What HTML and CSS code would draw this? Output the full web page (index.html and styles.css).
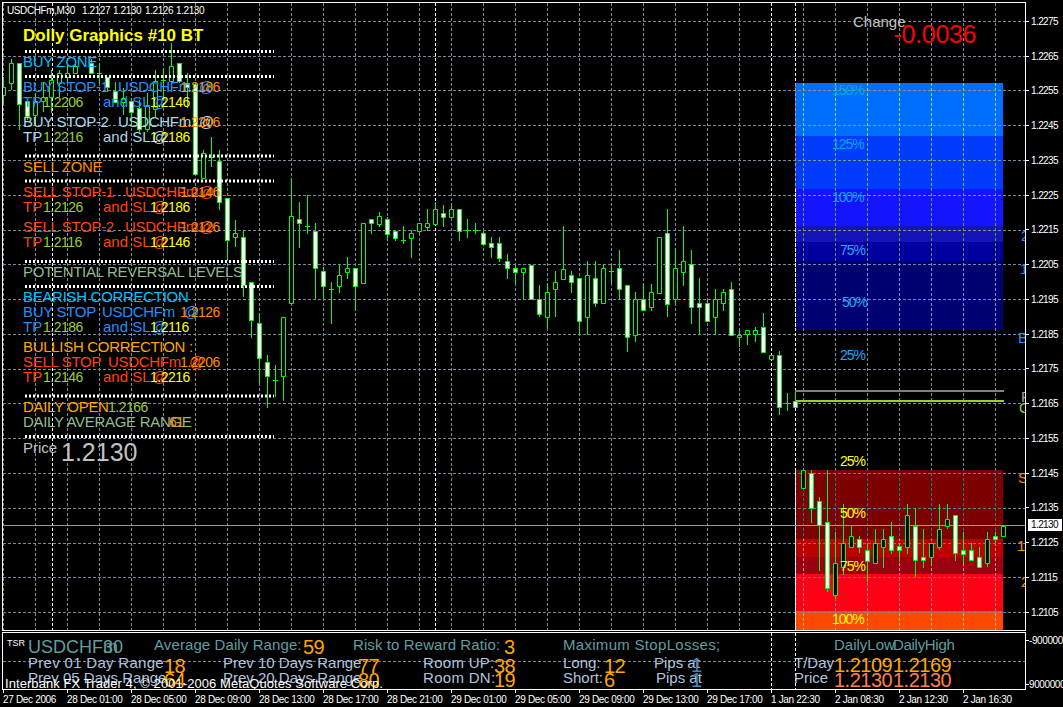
FILE: index.html
```html
<!DOCTYPE html>
<html lang="en">
<head>
<meta charset="utf-8">
<title>USDCHFm,M30</title>
<link rel="stylesheet" href="styles.css">
</head>
<body>
<main class="terminal">
  <section class="chart">
    <svg class="canvas chart-canvas" viewBox="3 3 1022 627" xmlns="http://www.w3.org/2000/svg">
      <defs>
        <path id="vgrid" d="M3.5 3V630M35.5 3V630M67.5 3V630M99.5 3V630M131.5 3V630M163.5 3V630M195.5 3V630M227.5 3V630M259.5 3V630M291.5 3V630M323.5 3V630M355.5 3V630M387.5 3V630M419.5 3V630M451.5 3V630M483.5 3V630M515.5 3V630M547.5 3V630M579.5 3V630M611.5 3V630M643.5 3V630M675.5 3V630M707.5 3V630M739.5 3V630M771.5 3V630M803.5 3V630M835.5 3V630M867.5 3V630M899.5 3V630M931.5 3V630M963.5 3V630M995.5 3V630"/>
        <path id="hgrid" d="M3 21.5H1025M3 56.5H1025M3 90.5H1025M3 125.5H1025M3 160.5H1025M3 195.5H1025M3 230.5H1025M3 264.5H1025M3 299.5H1025M3 334.5H1025M3 369.5H1025M3 403.5H1025M3 438.5H1025M3 473.5H1025M3 508.5H1025M3 543.5H1025M3 577.5H1025M3 612.5H1025"/>
        <clipPath id="c1"><rect x="795" y="83" width="208" height="53"/></clipPath>
        <clipPath id="c2"><rect x="795" y="136" width="208" height="53"/></clipPath>
        <clipPath id="c3"><rect x="795" y="189" width="208" height="37"/></clipPath>
        <clipPath id="c4"><rect x="795" y="226" width="208" height="16"/></clipPath>
        <clipPath id="c5"><rect x="795" y="242" width="208" height="19"/></clipPath>
        <clipPath id="c6"><rect x="795" y="261" width="208" height="69"/></clipPath>
        <clipPath id="c7"><rect x="795" y="470" width="208" height="69"/></clipPath>
        <clipPath id="c8"><rect x="795" y="539" width="208" height="18"/></clipPath>
        <clipPath id="c9"><rect x="795" y="557" width="208" height="17"/></clipPath>
        <clipPath id="c10"><rect x="795" y="574" width="208" height="37"/></clipPath>
        <clipPath id="c11"><rect x="795" y="611" width="208" height="20"/></clipPath>
      </defs>

      <rect class="z1" x="795" y="83" width="208" height="53"/>
      <rect class="z2" x="795" y="136" width="208" height="53"/>
      <rect class="z3" x="795" y="189" width="208" height="37"/>
      <rect class="z4" x="795" y="226" width="208" height="16"/>
      <rect class="z5" x="795" y="242" width="208" height="19"/>
      <rect class="z6" x="795" y="261" width="208" height="69"/>
      <rect class="z7" x="795" y="470" width="208" height="69"/>
      <rect class="z8" x="795" y="539" width="208" height="18"/>
      <rect class="z9" x="795" y="557" width="208" height="17"/>
      <rect class="z10" x="795" y="574" width="208" height="37"/>
      <rect class="z11" x="795" y="611" width="208" height="20"/>

      <use href="#vgrid" class="grid"/>
      <use href="#hgrid" class="grid"/>
      <use href="#vgrid" class="grid v1" clip-path="url(#c1)"/>
      <use href="#vgrid" class="grid v2" clip-path="url(#c2)"/>
      <use href="#vgrid" class="grid v3" clip-path="url(#c3)"/>
      <use href="#vgrid" class="grid v4" clip-path="url(#c4)"/>
      <use href="#vgrid" class="grid v5" clip-path="url(#c5)"/>
      <use href="#vgrid" class="grid v6" clip-path="url(#c6)"/>
      <use href="#vgrid" class="grid v7" clip-path="url(#c7)"/>
      <use href="#vgrid" class="grid v8" clip-path="url(#c8)"/>
      <use href="#vgrid" class="grid v9" clip-path="url(#c9)"/>
      <use href="#vgrid" class="grid v10" clip-path="url(#c10)"/>
      <use href="#vgrid" class="grid v11" clip-path="url(#c11)"/>
      <use href="#hgrid" class="grid hb" clip-path="url(#c1)"/>
      <use href="#hgrid" class="grid hb" clip-path="url(#c2)"/>
      <use href="#hgrid" class="grid hb" clip-path="url(#c3)"/>
      <use href="#hgrid" class="grid hb" clip-path="url(#c4)"/>
      <use href="#hgrid" class="grid hr" clip-path="url(#c7)"/>
      <use href="#hgrid" class="grid hr" clip-path="url(#c8)"/>
      <use href="#hgrid" class="grid hr" clip-path="url(#c9)"/>
      <use href="#hgrid" class="grid hr" clip-path="url(#c10)"/>

      <path class="sep" d="M52.5 3V630M435.5 3V630M771.5 3V630M795.5 3V630"/>
      <path class="sep sep-orange" d="M795.5 83V189"/>
      <path class="sep sep-yellow" d="M795.5 189V330"/>
      <path class="sep sep-cyan" d="M795.5 470V630"/>

      <path class="bid" d="M3 525.5H1025"/>
      <path class="level-grey" d="M795 391H1004"/>
      <path class="level-green" d="M795 401H1004"/>

      <path class="wick" d="M3.5 77V103M11.5 59V90M19.5 63V130M27.5 97V120M35.5 93V125M43.5 82V112M51.5 70V113M59.5 70V97M67.5 63V83M75.5 60V73M91.5 59V73M99.5 63V83M107.5 77V92M115.5 82V103M123.5 88V115M131.5 98V125M139.5 100V132M147.5 93V132M155.5 70V117M163.5 68V97M171.5 43V83M179.5 63V83M187.5 73V108M195.5 84V175M203.5 150V178M211.5 137V167M219.5 150V210M227.5 198V260M235.5 220V247M243.5 230V297M251.5 282V338M259.5 313V383M267.5 355V408M275.5 365V397M283.5 317V401M291.5 178V303M299.5 202V248M307.5 195V234M315.5 223V299M323.5 267V298M331.5 282V324M339.5 264V293M347.5 257V279M355.5 268V311M363.5 223V283M371.5 219V234M379.5 212V227M387.5 217V241M395.5 231V241M403.5 226V244M411.5 230V258M419.5 223V234M427.5 209V231M435.5 202V224M443.5 205V227M451.5 205V217M459.5 209V241M467.5 219V238M475.5 223V234M483.5 231V244M491.5 237V258M499.5 237V262M507.5 254V279M515.5 265V283M523.5 272V299M531.5 265V299M539.5 285V317M547.5 284V329M555.5 271V317M563.5 226V279M571.5 271V293M579.5 278V335M587.5 261V335M595.5 261V307M603.5 264V303M611.5 264V283M619.5 250V299M627.5 285V352M635.5 292V342M643.5 284V310M651.5 284V311M659.5 237V293M667.5 209V317M675.5 248V305M683.5 226V286M691.5 250V324M699.5 278V335M707.5 299V321M715.5 289V335M723.5 289V311M731.5 282V335M739.5 330V347M747.5 330V345M755.5 327V342M763.5 313V352M779.5 351V415M787.5 393V411M795.5 392V407M803.5 470V488M811.5 470V523M819.5 497V571M827.5 470V592M835.5 532V598M843.5 504V575M851.5 526V547M859.5 536V553M867.5 543V582M875.5 529V563M883.5 529V568M891.5 522V554M899.5 543V562M907.5 504V554M915.5 508V577M923.5 529V568M931.5 543V564M939.5 504V550M947.5 504V529M955.5 515V561M963.5 532V563M971.5 543V560M979.5 547V567M987.5 532V567M995.5 532V543M1003.5 526V536M97 73.5h5M161 80.5h5M209 157.5h5M273 380.5h5M305 226.5h5M329 289.5h5M401 240.5h5M465 230.5h5M473 230.5h5M609 271.5h5M785 403.5h5"/>
      <path class="body-up" d="M1.5 87.5h4v8h-4zM9.5 63.5h4v20h-4zM33.5 101.5h4v14h-4zM41.5 97.5h4v4h-4zM49.5 80.5h4v17h-4zM57.5 73.5h4v10h-4zM65.5 73.5h4v4h-4zM73.5 66.5h4v7h-4zM121.5 98.5h4v4h-4zM145.5 105.5h4v24h-4zM153.5 81.5h4v28h-4zM169.5 66.5h4v15h-4zM201.5 153.5h4v25h-4zM233.5 233.5h4v4h-4zM281.5 317.5h4v59h-4zM289.5 216.5h4v87h-4zM337.5 275.5h4v11h-4zM345.5 268.5h4v4h-4zM361.5 223.5h4v60h-4zM377.5 216.5h4v8h-4zM409.5 233.5h4v5h-4zM417.5 223.5h4v8h-4zM425.5 223.5h4v4h-4zM433.5 209.5h4v15h-4zM449.5 209.5h4v8h-4zM521.5 268.5h4v4h-4zM545.5 292.5h4v25h-4zM553.5 282.5h4v7h-4zM561.5 269.5h4v10h-4zM585.5 275.5h4v42h-4zM601.5 268.5h4v35h-4zM633.5 299.5h4v36h-4zM649.5 292.5h4v15h-4zM657.5 237.5h4v56h-4zM673.5 268.5h4v31h-4zM681.5 261.5h4v11h-4zM713.5 299.5h4v18h-4zM721.5 292.5h4v11h-4zM737.5 335.5h4v2h-4zM745.5 330.5h4v4h-4zM753.5 330.5h4v4h-4zM769.5 355.5h4v4h-4zM801.5 470.5h4v18h-4zM833.5 563.5h4v32h-4zM841.5 543.5h4v24h-4zM849.5 536.5h4v11h-4zM873.5 543.5h4v20h-4zM881.5 539.5h4v8h-4zM905.5 515.5h4v32h-4zM929.5 543.5h4v14h-4zM937.5 529.5h4v18h-4zM945.5 519.5h4v7h-4zM985.5 539.5h4v24h-4zM1001.5 526.5h4v10h-4z"/>
      <path class="body-down" d="M17.5 63.5h4v41h-4zM25.5 101.5h4v15h-4zM89.5 63.5h4v10h-4zM105.5 77.5h4v10h-4zM113.5 91.5h4v11h-4zM129.5 101.5h4v11h-4zM137.5 108.5h4v21h-4zM177.5 63.5h4v18h-4zM185.5 83.5h4v4h-4zM193.5 84.5h4v90h-4zM217.5 161.5h4v41h-4zM225.5 198.5h4v42h-4zM241.5 237.5h4v48h-4zM249.5 282.5h4v38h-4zM257.5 323.5h4v35h-4zM265.5 362.5h4v14h-4zM297.5 219.5h4v4h-4zM313.5 231.5h4v37h-4zM321.5 271.5h4v15h-4zM353.5 268.5h4v18h-4zM369.5 219.5h4v4h-4zM385.5 219.5h4v15h-4zM393.5 231.5h4v7h-4zM441.5 213.5h4v4h-4zM457.5 209.5h4v22h-4zM481.5 233.5h4v11h-4zM489.5 243.5h4v4h-4zM497.5 243.5h4v15h-4zM505.5 261.5h4v7h-4zM513.5 268.5h4v4h-4zM529.5 265.5h4v34h-4zM537.5 299.5h4v15h-4zM569.5 275.5h4v7h-4zM577.5 278.5h4v43h-4zM593.5 278.5h4v25h-4zM617.5 268.5h4v21h-4zM625.5 285.5h4v52h-4zM641.5 299.5h4v11h-4zM665.5 233.5h4v71h-4zM689.5 264.5h4v43h-4zM697.5 303.5h4v4h-4zM705.5 303.5h4v18h-4zM729.5 289.5h4v46h-4zM761.5 327.5h4v25h-4zM777.5 355.5h4v52h-4zM793.5 401.5h4v6h-4zM809.5 473.5h4v35h-4zM817.5 501.5h4v24h-4zM825.5 522.5h4v66h-4zM857.5 539.5h4v8h-4zM865.5 550.5h4v11h-4zM889.5 536.5h4v14h-4zM897.5 546.5h4v4h-4zM913.5 526.5h4v34h-4zM921.5 557.5h4v3h-4zM953.5 515.5h4v38h-4zM961.5 550.5h4v4h-4zM969.5 550.5h4v10h-4zM977.5 557.5h4v10h-4zM993.5 536.5h4v3h-4z"/>

      <path class="dots" d="M25 51.5H274M25 76.5H274M25 156H274M25 181H274M25 261.5H274M25 286.5H274M25 396H274M25 436.5H274"/>

      <text class="small" x="7" y="14">USDCHFm,M30</text>
      <text class="small" x="82" y="14">1.2127</text>
      <text class="small" x="113" y="14">1.2130</text>
      <text class="small" x="145" y="14">1.2126</text>
      <text class="small" x="176" y="14">1.2130</text>

      <text class="title" x="23" y="41">Dolly Graphics #10 BT</text>

      <text class="t caps sky" x="23" y="67">BUY ZONE</text>

      <text class="t caps dodger" x="23" y="92">BUY STOP-1</text>
      <text class="t caps dodger" x="118" y="92">USDCHFm</text>
      <text class="t dodger" x="199" y="92">@</text>
      <text class="n orange-dark" x="180" y="92">1.2186</text>
      <text class="t dodger" x="23" y="107">TP</text>
      <text class="n olive" x="43" y="107">1.2206</text>
      <text class="t dodger" x="103" y="107">and SL</text>
      <text class="t dodger" x="152" y="107">@</text>
      <text class="n yellow" x="150" y="107">1.2146</text>

      <text class="t caps light" x="23" y="127">BUY STOP-2</text>
      <text class="t caps light" x="118" y="127">USDCHFm</text>
      <text class="t light" x="199" y="127">@</text>
      <text class="n orange-dark" x="180" y="127">1.2206</text>
      <text class="t light" x="23" y="142">TP</text>
      <text class="n olive" x="43" y="142">1.2216</text>
      <text class="t light" x="103" y="142">and SL</text>
      <text class="t light" x="152" y="142">@</text>
      <text class="n yellow" x="150" y="142">1.2186</text>

      <text class="t caps orange-dark" x="23" y="172">SELL ZONE</text>

      <text class="t caps red-o" x="23" y="197">SELL STOP-1</text>
      <text class="t caps red-o" x="125" y="197">USDCHFm</text>
      <text class="t red-o" x="199" y="197">@</text>
      <text class="n orange-dark" x="180" y="197">1.2146</text>
      <text class="t red-o" x="23" y="212">TP</text>
      <text class="n olive" x="43" y="212">1.2126</text>
      <text class="t red-o" x="103" y="212">and SL</text>
      <text class="t red-o" x="152" y="212">@</text>
      <text class="n yellow" x="150" y="212">1.2186</text>

      <text class="t caps red-o" x="23" y="232">SELL STOP-2</text>
      <text class="t caps red-o" x="125" y="232">USDCHFm</text>
      <text class="t red-o" x="199" y="232">@</text>
      <text class="n orange-dark" x="180" y="232">1.2126</text>
      <text class="t red-o" x="23" y="247">TP</text>
      <text class="n olive" x="43" y="247">1.2116</text>
      <text class="t red-o" x="103" y="247">and SL</text>
      <text class="t red-o" x="152" y="247">@</text>
      <text class="n yellow" x="150" y="247">1.2146</text>

      <text class="t caps sea" x="23" y="277">POTENTIAL REVERSAL LEVELS</text>

      <text class="t caps sky" x="23" y="302">BEARISH CORRECTION</text>
      <text class="t caps dodger" x="23" y="317">BUY STOP</text>
      <text class="t caps dodger" x="102" y="317">USDCHFm</text>
      <text class="t dodger" x="184" y="317">@</text>
      <text class="n orange-dark" x="180" y="317">1.2126</text>
      <text class="t dodger" x="23" y="332">TP</text>
      <text class="n olive" x="43" y="332">1.2186</text>
      <text class="t dodger" x="103" y="332">and SL</text>
      <text class="t dodger" x="152" y="332">@</text>
      <text class="n yellow" x="150" y="332">1.2116</text>

      <text class="t caps orange" x="23" y="352">BULLISH CORRECTION :</text>
      <text class="t caps red-o" x="23" y="367">SELL STOP</text>
      <text class="t caps red-o" x="108" y="367">USDCHFm</text>
      <text class="t red-o" x="189" y="367">@</text>
      <text class="n orange-dark" x="180" y="367">1.2206</text>
      <text class="t red-o" x="23" y="382">TP</text>
      <text class="n olive" x="43" y="382">1.2146</text>
      <text class="t red-o" x="103" y="382">and SL</text>
      <text class="t red-o" x="152" y="382">@</text>
      <text class="n yellow" x="150" y="382">1.2216</text>

      <text class="t caps orange" x="23" y="412">DAILY OPEN</text>
      <text class="n olive" x="108" y="412">1.2166</text>
      <text class="t caps sea" x="23" y="427">DAILY AVERAGE RANGE</text>
      <text class="n orange-dark" x="169" y="427">61</text>

      <text class="t silver" x="23" y="453">Price</text>
      <text class="big silver" x="61" y="461">1.2130</text>
      <text class="t silver" x="853" y="27">Change</text>
      <text class="big tight red" x="893.5" y="43">-0.0036</text>

      <text class="pct cyan-a" x="832" y="95">150%</text>
      <text class="pct cyan-a" x="832" y="149">125%</text>
      <text class="pct cyan-a" x="832" y="202">100%</text>
      <text class="pct sky-b" x="840" y="255">75%</text>
      <text class="pct sky-b" x="842" y="307">50%</text>
      <text class="pct sky-b" x="840" y="360">25%</text>
      <text class="pct yellow" x="840" y="466">25%</text>
      <text class="pct yellow" x="840" y="518">50%</text>
      <text class="pct yellow" x="840" y="571">75%</text>
      <text class="pct yellow" x="832" y="624">100%</text>

      <text class="t dodger" x="1021" y="241">2</text>
      <text class="t dodger" x="1020" y="274">1</text>
      <text class="t dodger" x="1018" y="343">B</text>
      <text class="t grey" x="1021" y="402">P</text>
      <text class="t olive" x="1019" y="413">O</text>
      <text class="t orange-dark" x="1018" y="483">S</text>
      <text class="t orange-dark" x="1017" y="551">1:</text>
      <text class="t orange-dark" x="1021" y="587">2</text>
    </svg>
  </section>

  <aside class="price-axis">
    <div class="price-row"><i class="tick"></i>1.2275</div>
    <div class="price-row"><i class="tick"></i>1.2265</div>
    <div class="price-row"><i class="tick"></i>1.2255</div>
    <div class="price-row"><i class="tick"></i>1.2245</div>
    <div class="price-row"><i class="tick"></i>1.2235</div>
    <div class="price-row"><i class="tick"></i>1.2225</div>
    <div class="price-row"><i class="tick"></i>1.2215</div>
    <div class="price-row"><i class="tick"></i>1.2205</div>
    <div class="price-row"><i class="tick"></i>1.2195</div>
    <div class="price-row"><i class="tick"></i>1.2185</div>
    <div class="price-row"><i class="tick"></i>1.2175</div>
    <div class="price-row"><i class="tick"></i>1.2165</div>
    <div class="price-row"><i class="tick"></i>1.2155</div>
    <div class="price-row"><i class="tick"></i>1.2145</div>
    <div class="price-row"><i class="tick"></i>1.2135</div>
    <div class="price-row"><i class="tick"></i>1.2125</div>
    <div class="price-row"><i class="tick"></i>1.2115</div>
    <div class="price-row"><i class="tick"></i>1.2105</div>
    <div class="bid-box">1.2130</div>
  </aside>

  <section class="pane">
    <svg class="canvas pane-canvas" viewBox="3 633 1022 56" xmlns="http://www.w3.org/2000/svg">
      <use href="#vgrid" class="grid"/>
      <path class="grid" d="M3 661.5H1025"/>
      <path class="sep" d="M771.5 633V689M795.5 633V689"/>

      <text class="tiny" x="7" y="646">TSR</text>
      <text class="head cadet" x="28" y="653">USDCHFm</text>
      <text class="head cadet" x="103" y="653">30</text>
      <text class="t wide-s cadet" x="154" y="650">Average Daily Range:</text>
      <text class="v orange" x="303" y="654">59</text>
      <text class="t wide-s cadet" x="353" y="650">Risk to Reward Ratio:</text>
      <text class="v orange" x="504" y="654">3</text>
      <text class="t wide cadet" x="563" y="650">Maximum StopLosses;</text>
      <text class="t cadet" x="834" y="650">DailyLow</text>
      <text class="t narrow cadet" x="893" y="650">DailyHigh</text>

      <text class="t wide steel" x="28" y="668">Prev 01 Day Range</text>
      <text class="v orange" x="164" y="673">18</text>
      <text class="t steel" x="223" y="668">Prev 10 Days Range</text>
      <text class="v orange" x="358" y="673">77</text>
      <text class="t wide steel" x="423" y="668">Room UP:</text>
      <text class="v orange" x="494" y="673">38</text>
      <text class="t steel" x="563" y="668">Long:</text>
      <text class="v orange" x="604" y="673">12</text>
      <text class="t steel" x="654" y="668">Pips at</text>
      <text class="v steel-dark" x="691" y="672">1</text>
      <text class="t steel" x="794" y="668">T/Day</text>
      <text class="v orange" x="834" y="672">1.2109</text>
      <text class="v orange" x="893" y="672">1.2169</text>

      <text class="t steel" x="28" y="683">Prev 05 Days Range</text>
      <text class="v orange" x="164" y="687">64</text>
      <text class="t steel" x="223" y="683">Prev 20 Days Range</text>
      <text class="v orange" x="358" y="687">80</text>
      <text class="t wide steel" x="423" y="683">Room DN:</text>
      <text class="v orange" x="494" y="687">19</text>
      <text class="t steel" x="563" y="683">Short:</text>
      <text class="v orange" x="604" y="687">6</text>
      <text class="t steel" x="656" y="683">Pips at</text>
      <text class="v steel-dark" x="691" y="687">1</text>
      <text class="t steel" x="794" y="683">Price</text>
      <text class="v coral" x="834" y="687">1.2130</text>
      <text class="v coral" x="893" y="687">1.2130</text>

      <text class="legal" x="5" y="688">Interbank FX Trader 4, © 2001-2006 MetaQuotes Software Corp.</text>
    </svg>
  </section>

  <aside class="pane-axis">
    <div class="pane-row"><i class="tick"></i>-9000000</div>
    <div class="pane-row"><i class="tick"></i>9000000</div>
  </aside>

  <footer class="time-axis">
    <div class="time-cell"><i class="time-tick"></i><span>27 Dec 2006</span></div>
    <div class="time-cell"><i class="time-tick"></i><span>28 Dec 01:00</span></div>
    <div class="time-cell"><i class="time-tick"></i><span>28 Dec 05:00</span></div>
    <div class="time-cell"><i class="time-tick"></i><span>28 Dec 09:00</span></div>
    <div class="time-cell"><i class="time-tick"></i><span>28 Dec 13:00</span></div>
    <div class="time-cell"><i class="time-tick"></i><span>28 Dec 17:00</span></div>
    <div class="time-cell"><i class="time-tick"></i><span>28 Dec 21:00</span></div>
    <div class="time-cell"><i class="time-tick"></i><span>29 Dec 01:00</span></div>
    <div class="time-cell"><i class="time-tick"></i><span>29 Dec 05:00</span></div>
    <div class="time-cell"><i class="time-tick"></i><span>29 Dec 09:00</span></div>
    <div class="time-cell"><i class="time-tick"></i><span>29 Dec 13:00</span></div>
    <div class="time-cell"><i class="time-tick"></i><span>29 Dec 17:00</span></div>
    <div class="time-cell"><i class="time-tick"></i><span>1 Jan 22:30</span></div>
    <div class="time-cell"><i class="time-tick"></i><span>2 Jan 08:30</span></div>
    <div class="time-cell"><i class="time-tick"></i><span>2 Jan 12:30</span></div>
    <div class="time-cell"><i class="time-tick"></i><span>2 Jan 16:30</span></div>
  </footer>
</main>
</body>
</html>
```

FILE: styles.css
```css
* { box-sizing: border-box; margin: 0; padding: 0; }

html, body {
  width: 1063px;
  height: 707px;
  overflow: hidden;
  background: #000;
}

body {
  color: #fff;
  font-family: "Liberation Sans", Arial, sans-serif;
}

.terminal {
  display: grid;
  grid-template-columns: 1024px 37px;
  grid-template-rows: 629px 59px 1fr;
  width: 1063px;
  height: 707px;
  padding: 2px 0 0 2px;
}

.chart, .pane { border: 1px solid #fff; }
.pane { margin-top: 1px; }

.canvas { display: block; width: 1022px; }
.chart-canvas { height: 627px; }
.pane-canvas { height: 56px; }

/* axes */
.price-axis {
  position: relative;
  display: grid;
  grid-auto-rows: 34.765px;
  padding-top: 2.1px;
  font-size: 10px;
  letter-spacing: -0.6px;
}
.price-row { display: flex; align-items: center; gap: 2px; }
.tick { display: block; width: 3px; height: 1px; background: #fff; flex: none; }

.bid-box {
  position: absolute;
  left: 2px;
  top: 517px;
  width: 34px;
  height: 12px;
  background: #fff;
  color: #000;
  line-height: 12px;
  padding-left: 3px;
}

.pane-axis {
  display: flex;
  flex-direction: column;
  justify-content: space-between;
  margin-top: 1px;
  padding: 2px 0 0;
  font-size: 10px;
  letter-spacing: -0.4px;
  white-space: nowrap;
  overflow: hidden;
}
.pane-row { display: flex; align-items: center; gap: 0; height: 12px; }

.time-axis {
  grid-column: 1 / -1;
  display: grid;
  grid-auto-flow: column;
  grid-auto-columns: 64px;
  justify-content: start;
  padding-left: 1px;
  font-size: 10px;
  letter-spacing: -0.33px;
  white-space: nowrap;
}
.time-cell { display: flex; flex-direction: column; line-height: 11px; }
.time-tick { display: block; width: 1px; height: 3px; background: #fff; margin-bottom: 1px; }

/* chart primitives */
.grid { fill: none; stroke: #778899; stroke-width: 1; stroke-dasharray: 3 2; }
.sep { fill: none; stroke: #fff; stroke-width: 1; stroke-dasharray: 3 2; }
.sep-orange { stroke: #ff9100; }
.sep-yellow { stroke: #ffff80; }
.sep-cyan { stroke: #83ffff; }
.bid { fill: none; stroke: #8c99a8; stroke-width: 1; }
.level-grey { fill: none; stroke: #808080; stroke-width: 2; }
.level-green { fill: none; stroke: #9acd32; stroke-width: 2; }
.wick { fill: none; stroke: #0f0; stroke-width: 1; }
.body-up { fill: #000; stroke: #0f0; stroke-width: 1; }
.body-down { fill: #fff; stroke: #0f0; stroke-width: 1; }
.dots { fill: none; stroke: #fff; stroke-width: 3; stroke-dasharray: 2 2; }

.z1 { fill: #006eff; }
.z2 { fill: #003cff; }
.z3 { fill: #1414ff; }
.z4 { fill: #1414b8; }
.z5 { fill: #0000a0; }
.z6 { fill: #000070; }
.z7 { fill: #7c0000; }
.z8 { fill: #bb0000; }
.z9 { fill: #9c0010; }
.z10 { fill: #ff0014; }
.z11 { fill: #ff4800; }

.v1 { stroke: #77e666; }
.v2 { stroke: #77b466; }
.v3 { stroke: #639c66; }
.v4 { stroke: #639c21; }
.v5 { stroke: #778839; }
.v6 { stroke: #7788e9; }
.v7 { stroke: #0b8899; }
.v8 { stroke: #cc8899; }
.v9 { stroke: #eb8889; }
.v10 { stroke: #88888d; }
.v11 { stroke: #88c099; }
.hb { stroke: #909080; }
.hr { stroke: #508a9a; }

/* chart texts */
text { font-family: "Liberation Sans", Arial, sans-serif; }
.t { font-size: 15px; }
.caps { letter-spacing: -0.3px; }
.wide { letter-spacing: 0.3px; }
.wide-s { letter-spacing: 0.1px; }
.narrow { letter-spacing: -0.3px; }
.tight { letter-spacing: -0.3px; }
.n { font-size: 14px; letter-spacing: -0.5px; }
.small { font-size: 10px; letter-spacing: -0.4px; fill: #fff; }
.tiny { font-size: 9px; fill: #fff; }
.title { font-size: 17px; font-weight: 700; fill: #ff0; }
.big { font-size: 25px; }
.pct { font-size: 14px; letter-spacing: -1px; }
.head { font-size: 18px; }
.v { font-size: 20px; letter-spacing: -0.5px; }
.legal { font-size: 13px; letter-spacing: 0.07px; fill: #fff; }

.sky { fill: #00bfff; }
.dodger { fill: #1e90ff; }
.light { fill: #add8e6; }
.olive { fill: #9acd32; }
.yellow { fill: #ff0; }
.orange-dark { fill: #ff8c00; }
.orange { fill: #ffa500; }
.red-o { fill: #ff4500; }
.red { fill: #f00; }
.sea { fill: #8fbc8f; }
.silver { fill: #c0c0c0; }
.grey { fill: #a0a0a0; }
.cyan-a { fill: #00a8e8; }
.sky-b { fill: #1eaaff; }
.cadet { fill: #5f9ea0; }
.steel { fill: #b0c4de; }
.steel-dark { fill: #4682b4; }
.coral { fill: #ff7f50; }
```
